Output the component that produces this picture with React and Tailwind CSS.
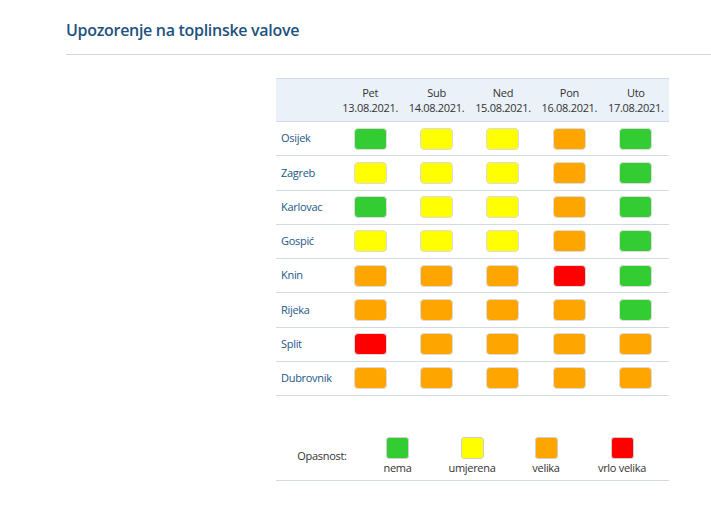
const days = [
  { name: "Pet", date: "13.08.2021." },
  { name: "Sub", date: "14.08.2021." },
  { name: "Ned", date: "15.08.2021." },
  { name: "Pon", date: "16.08.2021." },
  { name: "Uto", date: "17.08.2021." },
];

// G = nema, Y = umjerena, O = velika, R = vrlo velika
const levelClass = {
  G: "bg-[#33cc33]",
  Y: "bg-[#ffff00]",
  O: "bg-[#ffa500]",
  R: "bg-[#ff0000]",
};

const rows = [
  { city: "Osijek", levels: ["G", "Y", "Y", "O", "G"] },
  { city: "Zagreb", levels: ["Y", "Y", "Y", "O", "G"] },
  { city: "Karlovac", levels: ["G", "Y", "Y", "O", "G"] },
  { city: "Gospić", levels: ["Y", "Y", "Y", "O", "G"] },
  { city: "Knin", levels: ["O", "O", "O", "R", "G"] },
  { city: "Rijeka", levels: ["O", "O", "O", "O", "G"] },
  { city: "Split", levels: ["R", "O", "O", "O", "O"] },
  { city: "Dubrovnik", levels: ["O", "O", "O", "O", "O"] },
];

const legend = [
  { label: "nema", level: "G", w: "w-[59px]" },
  { label: "umjerena", level: "Y", w: "w-[90px]" },
  { label: "velika", level: "O", w: "w-[58px]" },
  { label: "vrlo velika", level: "R", w: "w-[94px]" },
];

function Box({ level }) {
  return (
    <div
      className={`h-[22px] w-[33px] rounded-[4px] border border-[#dcdcdc] ${levelClass[level]}`}
    />
  );
}

export default function App() {
  return (
    <div className="min-h-[505px] bg-white font-['Open_Sans',sans-serif] text-[11px] tracking-[-0.3px] text-[#333]">
      <div className="ml-[66px]">
        {/* Title */}
        <div className="border-b border-[#cfd5db] pb-[13px] pt-[19px]">
          <h1 className="text-[16px] font-semibold leading-[22px] tracking-[-0.3px] text-[#1e5280]">
            Upozorenje na toplinske valove
          </h1>
        </div>

        {/* Table */}
        <div className="ml-[210px] mt-[23px] w-[393px]">
          <div className="flex border-y border-[#d3dae1] bg-[#eaf1f8] py-[6px] leading-[15px]">
            <div className="w-[61px] shrink-0" />
            {days.map((d) => (
              <div key={d.date} className="flex w-[66.4px] shrink-0 flex-col items-center">
                <span>{d.name}</span>
                <span>{d.date}</span>
              </div>
            ))}
          </div>

          {rows.map((r) => (
            <div
              key={r.city}
              className="flex h-[34.25px] items-center border-b border-[#d3dae1]"
            >
              <div className="w-[61px] shrink-0 pl-[5px] text-[#23588a]">{r.city}</div>
              {r.levels.map((lv, i) => (
                <div key={i} className="flex w-[66.4px] shrink-0 justify-center">
                  <Box level={lv} />
                </div>
              ))}
            </div>
          ))}

          {/* Legend */}
          <div className="mt-[41px] flex items-center border-b border-[#d3dae1] pb-[4px]">
            <div className="w-[92px] shrink-0 text-center">Opasnost:</div>
            {legend.map((l) => (
              <div key={l.label} className={`flex shrink-0 flex-col items-center ${l.w}`}>
                <div
                  className={`h-[22px] w-[23px] rounded-[3px] border border-[#d0d0d0] ${levelClass[l.level]}`}
                />
                <span className="mt-[1px] leading-[16px]">{l.label}</span>
              </div>
            ))}
          </div>
        </div>
      </div>
    </div>
  );
}
